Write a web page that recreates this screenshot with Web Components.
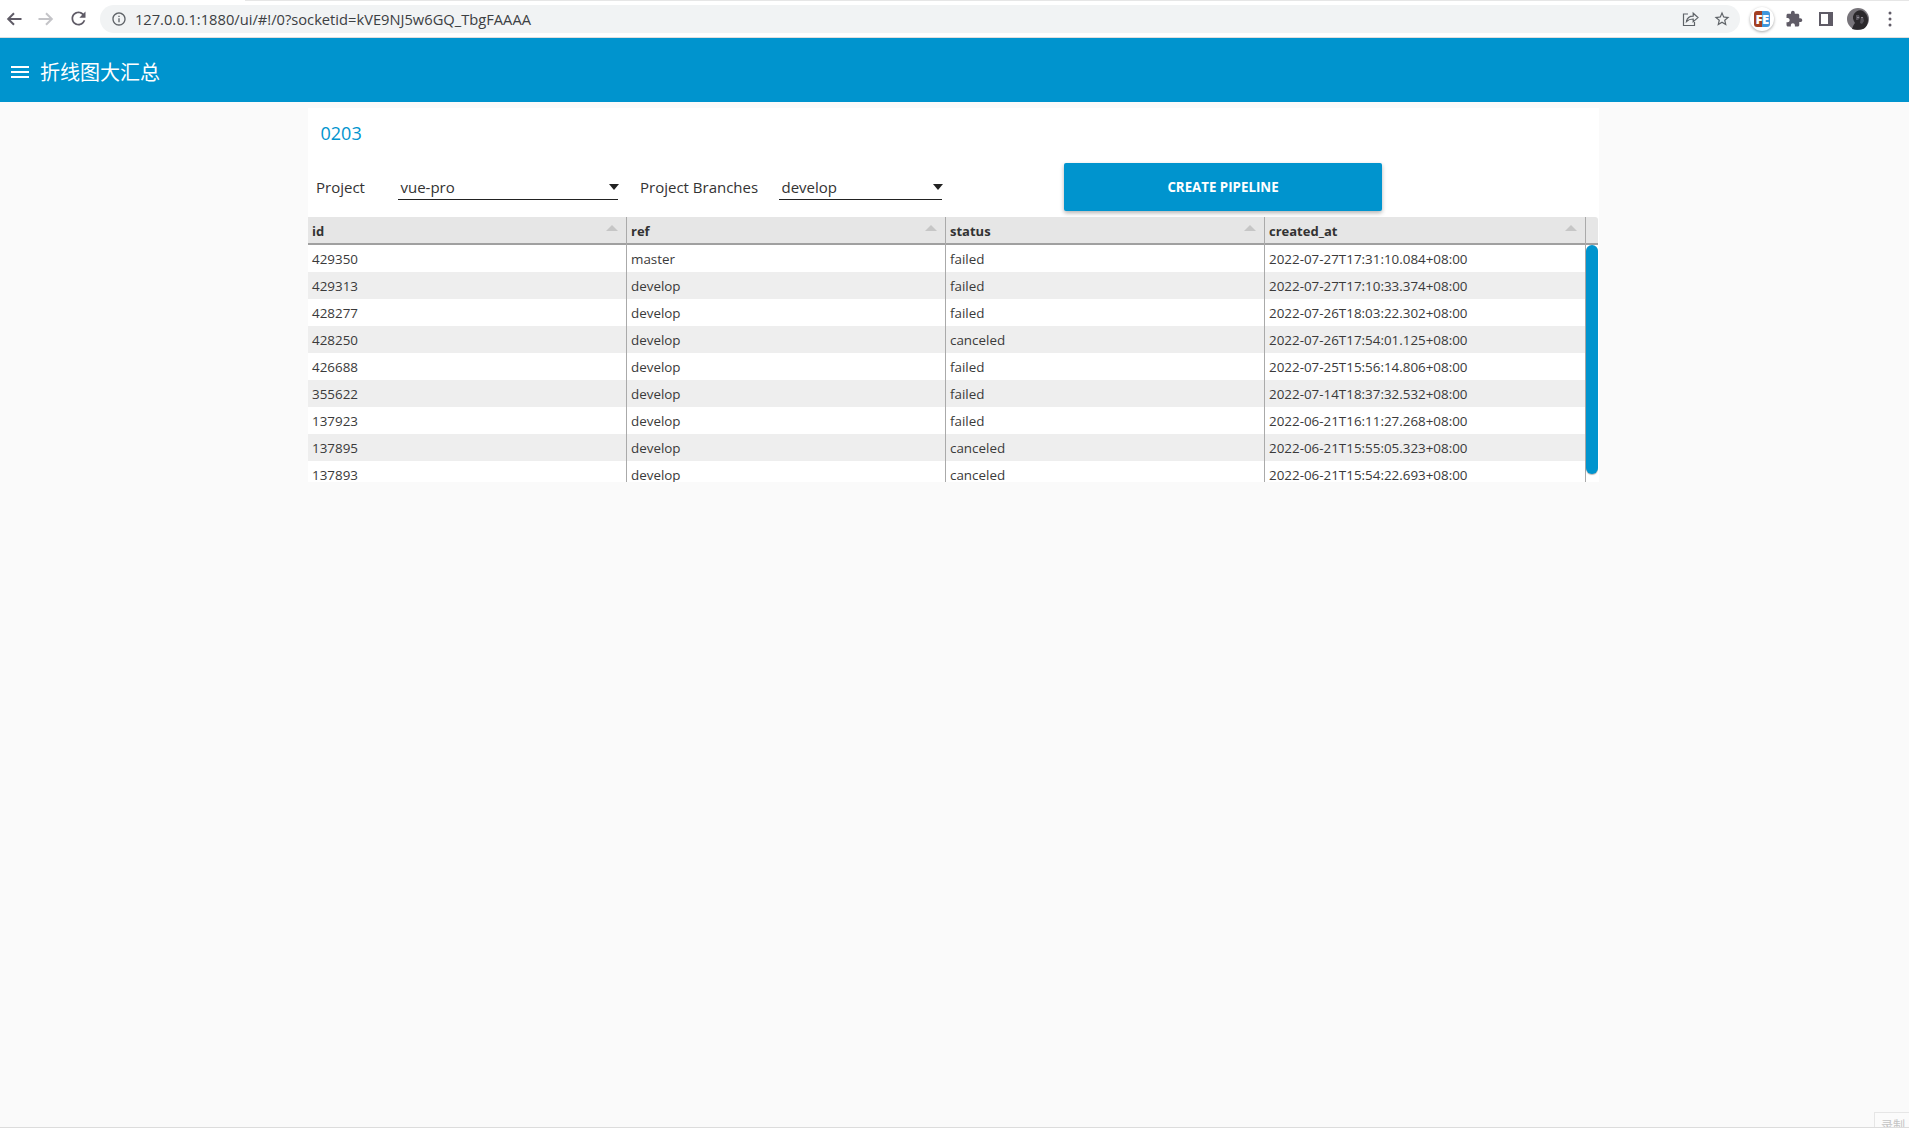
<!DOCTYPE html>
<html lang="zh"><head><meta charset="utf-8"><title>折线图大汇总</title>
<style>
html,body{margin:0;padding:0;height:100%;background:#fafafa;overflow:hidden}
body{font-family:"Open Sans","Noto Sans CJK SC",sans-serif;display:flex;flex-direction:column;height:1128px;position:relative;box-shadow:inset 0 -1px #dcdcdc}
</style></head><body>
<browser-bar url="127.0.0.1:1880/ui/#!/0?socketid=kVE9NJ5w6GQ_TbgFAAAA"></browser-bar>
<app-toolbar>折线图大汇总</app-toolbar>
<pipeline-card heading="0203"></pipeline-card>
<rec-badge>录制</rec-badge>
<script>
function def(name,css,html,init){
  customElements.define(name,class extends HTMLElement{
    connectedCallback(){
      if(this.shadowRoot)return;
      const r=this.attachShadow({mode:'open'});
      r.innerHTML='<style>'+css+'</style>'+(typeof html==='function'?html(this):html);
      if(init)init(this,r);
    }
  });
}
const I={
 back:'<svg width="16" height="14" viewBox="0 0 16 14" fill="none" stroke="#5f5b66" stroke-width="2"><path d="M15.5 7H2.5M8 1.2L2.2 7 8 12.8"/></svg>',
 fwd:'<svg width="16" height="14" viewBox="0 0 16 14" fill="none" stroke="#c4c4c8" stroke-width="2"><path d="M.5 7h13M8 1.2L13.8 7 8 12.8"/></svg>',
 reload:'<svg width="21" height="21" viewBox="0 0 24 24"><path fill="#5f5b66" d="M17.65 6.35C16.2 4.9 14.21 4 12 4c-4.42 0-7.99 3.58-7.99 8s3.57 8 7.99 8c3.73 0 6.84-2.55 7.73-6h-2.08c-.82 2.33-3.04 4-5.65 4-3.31 0-6-2.69-6-6s2.69-6 6-6c1.66 0 3.14.69 4.22 1.78L13 11h7V4l-2.35 2.35z"/></svg>',
 info:'<svg width="16" height="16" viewBox="0 0 24 24"><path fill="#5f6368" d="M11 7h2v2h-2zm0 4h2v6h-2zm1-9C6.48 2 2 6.48 2 12s4.48 10 10 10 10-4.48 10-10S17.52 2 12 2zm0 18c-4.41 0-8-3.59-8-8s3.59-8 8-8 8 3.59 8 8-3.59 8-8 8z"/></svg>',
 share:'<svg width="18" height="18" viewBox="0 0 18 18" fill="none" stroke="#5f6368" stroke-width="1.2"><path d="M7 4H2.5v11.5h11V12"/><path d="M5.5 11.5c.6-3.6 3.2-5.4 6.7-5.4V3.2L17 7.6l-4.8 4.2V9c-3 0-5 .7-6.7 2.5z"/></svg>',
 star:'<svg width="18" height="18" viewBox="0 0 24 24"><path fill="#5f6368" d="M22 9.24l-7.19-.62L12 2 9.19 8.63 2 9.24l5.46 4.73L5.82 21 12 17.27 18.18 21l-1.63-7.03L22 9.24zM12 15.4l-3.76 2.27 1-4.28-3.32-2.88 4.38-.38L12 6.1l1.71 4.04 4.38.38-3.32 2.88 1 4.28L12 15.4z"/></svg>',
 puzzle:'<svg width="18" height="18" viewBox="0 0 24 24"><path fill="#5f5b66" d="M20.5 11H19V7c0-1.1-.9-2-2-2h-4V3.5C13 2.12 11.88 1 10.5 1S8 2.12 8 3.5V5H4c-1.1 0-1.99.9-1.99 2v3.8H3.5c1.49 0 2.7 1.21 2.7 2.7s-1.21 2.7-2.7 2.7H2V20c0 1.1.9 2 2 2h3.8v-1.5c0-1.49 1.21-2.7 2.7-2.7 1.49 0 2.7 1.21 2.7 2.7V22H17c1.1 0 2-.9 2-2v-4h1.5c1.38 0 2.5-1.12 2.5-2.5S21.88 11 20.5 11z"/></svg>',
 side:'<svg width="14" height="14" viewBox="0 0 14 14"><path fill="#5f5b66" fill-rule="evenodd" d="M0 0h14v14H0zM2 2v10h7V2z"/></svg>',
 avatar:'<svg width="22" height="22" viewBox="0 0 22 22"><circle cx="11" cy="11" r="11" fill="#77747a"/><path fill="#2b292c" d="M5 21c1-3 2-5 3-6-2-3-3-6-1-9 2-3 6-5 9-3 3 2 5 5 5 9 0 4-2 8-5 9-4 1-8 1-11 0z"/><path fill="#55525a" d="M9 7h3l1 3-2 2H9zM14 9h2l1 4-2 3-2-1z"/><path fill="#8f8c94" d="M10 9h2v1h-2zM14 9h2v1h-2z"/></svg>',
 dots:'<svg width="4" height="16" viewBox="0 0 4 16"><circle cx="2" cy="2" r="1.5" fill="#5f5b66"/><circle cx="2" cy="8" r="1.5" fill="#5f5b66"/><circle cx="2" cy="14" r="1.5" fill="#5f5b66"/></svg>'
};
def('browser-bar',`
 :host{display:flex;align-items:center;height:37px;flex:none;background:linear-gradient(#e6e6e6,#e6e6e6) 245px 0/100% 1px no-repeat #fff;border-bottom:1px solid #dedede;box-sizing:content-box;color:#3c4043}
 .nav{display:grid;grid-template-columns:28px 36px 28px;width:100px;flex:none}
 .nav span,.act span{display:flex;align-items:center;justify-content:center}
 .addr{flex:none;width:1640px;height:28px;margin-top:1px;background:#f1f3f4;border-radius:14px;display:flex;align-items:center;box-sizing:border-box;padding-left:10.7px;font:14.7px "Open Sans",sans-serif}
 .url{margin-left:8.2px;white-space:nowrap}
 .sp{flex:1}
 .act{display:grid;grid-template-columns:repeat(5,32px);margin-left:6px}
 .fe{width:24px;height:24px;border-radius:50%;background:#fff;box-shadow:0 1px 3px rgba(0,0,0,.35);justify-self:center}
 .logo{width:16px;height:16px;border-radius:3px;font:800 13px/16px "Open Sans",sans-serif;color:#fff;background:linear-gradient(90deg,#a33f22 50%,#3f97dc 50%);letter-spacing:-.6px;overflow:hidden}
`,h=>`<div class="nav"><span>${I.back}</span><span>${I.fwd}</span><span>${I.reload}</span></div>
 <div class="addr">${I.info}<span class="url">${h.getAttribute('url')}</span><span class="sp"></span><span style="display:flex;gap:14px;padding-right:9px">${I.share}${I.star}</span></div>
 <div class="act"><span class="fe"><span class="logo">FE</span></span><span>${I.puzzle}</span><span>${I.side}</span><span>${I.avatar}</span><span>${I.dots}</span></div>`);
def('app-toolbar',`
 :host{display:flex;align-items:center;height:64px;flex:none;background:#0094ce;color:#fff;padding-left:11px;box-sizing:border-box;gap:11px;font:20px "Noto Sans CJK SC",sans-serif}
 svg{display:block}
 .t{line-height:28px;margin-top:4px}
 .b{margin-top:4px}
`,`<svg class="b" width="18" height="12" viewBox="0 0 18 12"><path fill="#fff" d="M0 0h18v2H0zM0 5h18v2H0zM0 10h18v2H0z"/></svg><span class="t"><slot></slot></span>`);
def('form-select',`
 :host{display:block;box-sizing:border-box;height:26px;border-bottom:1px solid #222;position:relative;font:15px/24px "Open Sans",sans-serif;color:#333;padding:1px 0 0 2.5px}
 i{position:absolute;right:-.5px;top:10px;width:0;height:0;border:5px solid transparent;border-top:6px solid #222;border-bottom:0}
`,`<slot></slot><i></i>`);
def('action-button',`
 :host{display:flex;align-items:center;justify-content:center;width:318px;height:48px;background:#0094ce;color:#fff;border-radius:2px;box-shadow:0 2px 4px rgba(0,0,0,.3);font:700 13.3px "Open Sans",sans-serif;text-transform:uppercase;flex:none}
`,`<slot></slot>`);
const COLS=['id','ref','status','created_at'];
const ROWS=[
['429350','master','failed','2022-07-27T17:31:10.084+08:00'],
['429313','develop','failed','2022-07-27T17:10:33.374+08:00'],
['428277','develop','failed','2022-07-26T18:03:22.302+08:00'],
['428250','develop','canceled','2022-07-26T17:54:01.125+08:00'],
['426688','develop','failed','2022-07-25T15:56:14.806+08:00'],
['355622','develop','failed','2022-07-14T18:37:32.532+08:00'],
['137923','develop','failed','2022-06-21T16:11:27.268+08:00'],
['137895','develop','canceled','2022-06-21T15:55:05.323+08:00'],
['137893','develop','canceled','2022-06-21T15:54:22.693+08:00']];
def('data-table',`
 :host{display:block;font:13.4px "Open Sans",sans-serif;color:#3a3a3a;width:1290px}
 .r{display:grid;grid-template-columns:319px 319px 319px 321px}
 .head{background:#e6e6e6;height:28px;border-bottom:2px solid #a0a0a0;box-sizing:border-box;border-radius:0 3px 0 0;width:1290px;grid-template-columns:319px 319px 319px 321px 12px;font-weight:700;font-size:13px;color:#333}
 .head>div{border-right:1px solid #aaa;padding-left:4px;line-height:28px;position:relative;box-sizing:border-box}
 .head>div:last-child{border:0}
 .head i{position:absolute;right:8px;top:8px;border:6px solid transparent;border-bottom:6px solid #c6c6c6;border-top:0}
 .wrap{display:flex;height:237px;overflow:hidden}
 .body{width:1278px;flex:none}
 .row{height:27px;line-height:28px}
 .row:nth-child(even){background:#eee}
 .row>div{border-right:1px solid #aaa;padding-left:4px;box-sizing:border-box;white-space:nowrap}
 .sb{width:12px;flex:none}
 .th{height:229px;background:#0094ce;border-radius:6px;box-shadow:0 1px 1px rgba(0,0,0,.3)}
`,()=>`<div class="r head">${COLS.map(c=>`<div>${c}<i></i></div>`).join('')}<div></div></div>
 <div class="wrap"><div class="body">${ROWS.map(r=>`<div class="r row">${r.map(c=>`<div>${c}</div>`).join('')}</div>`).join('')}</div><div class="sb"><div class="th"></div></div></div>`);
def('pipeline-card',`
 :host{display:block;flex:none;width:1291px;height:374px;margin:6px 0 0 307.5px;background:#fff;box-sizing:border-box}
 h2{margin:0;height:55px;box-sizing:border-box;padding:10px 0 0 13px;font:400 18px/30px "Open Sans",sans-serif;color:#0094ce}
 .bar{display:flex;align-items:center;height:48px;padding-left:8.5px;font:15px "Open Sans",sans-serif;color:#333;margin-bottom:6px}
 .l1{width:82px;flex:none}
 .l2{width:139px;flex:none;margin-left:22px}
 form-select{flex:none}
 .s1{width:220px}.s2{width:163px}
 action-button{margin-left:122px}
 data-table{margin-left:.5px}
`,h=>`<h2>${h.getAttribute('heading')}</h2>
 <div class="bar"><span class="l1">Project</span><form-select class="s1">vue-pro</form-select><span class="l2">Project Branches</span><form-select class="s2">develop</form-select><action-button>Create Pipeline</action-button></div>
 <data-table></data-table>`);
def('rec-badge',`
 :host{position:absolute;right:0;bottom:1px;width:35px;height:15px;box-sizing:border-box;border:1px solid #e6e6e6;border-bottom:0;border-right:0;background:#fbfbfb;color:#c4c4c4;font:12px/1 "Noto Sans CJK SC",sans-serif;overflow:hidden;padding:6px 0 0 6px;white-space:nowrap}
`,`<slot></slot>`);
</script>
</body></html>
